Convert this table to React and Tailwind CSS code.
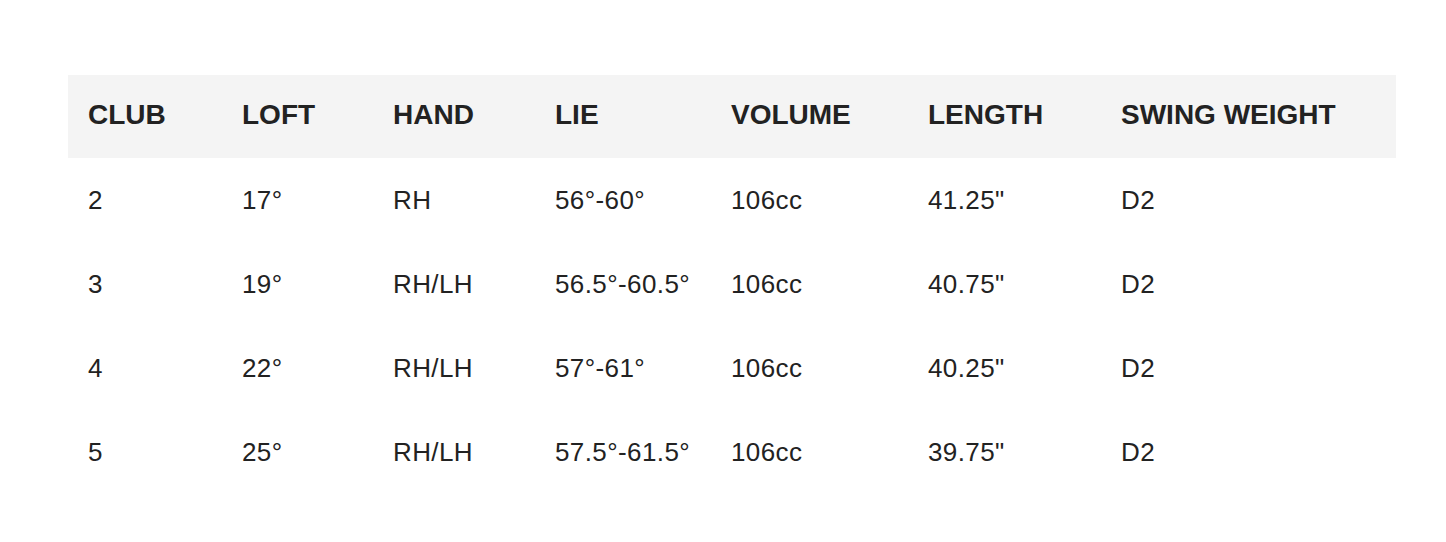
const headers = ["CLUB", "LOFT", "HAND", "LIE", "VOLUME", "LENGTH", "SWING WEIGHT"];

const rows = [
  ["2", "17°", "RH", "56°-60°", "106cc", "41.25\"", "D2"],
  ["3", "19°", "RH/LH", "56.5°-60.5°", "106cc", "40.75\"", "D2"],
  ["4", "22°", "RH/LH", "57°-61°", "106cc", "40.25\"", "D2"],
  ["5", "25°", "RH/LH", "57.5°-61.5°", "106cc", "39.75\"", "D2"],
];

export default function App() {
  return (
    <div
      className="min-h-[542px] w-full bg-white pt-[75px] pl-[68px] pr-[50px] text-[#222222]"
      style={{ fontFamily: '"Liberation Sans", Arial, sans-serif' }}
    >
      <table className="w-[1328px] table-fixed border-collapse">
        <colgroup>
          <col className="w-[154px]" />
          <col className="w-[151px]" />
          <col className="w-[162px]" />
          <col className="w-[176px]" />
          <col className="w-[197px]" />
          <col className="w-[193px]" />
          <col className="w-[295px]" />
        </colgroup>
        <thead>
          <tr className="h-[83px] bg-[#f4f4f4]">
            {headers.map((h) => (
              <th
                key={h}
                className="pl-5 pb-[4px] text-left align-middle text-[28px] font-bold leading-none whitespace-nowrap"
              >
                {h}
              </th>
            ))}
          </tr>
        </thead>
        <tbody>
          {rows.map((r) => (
            <tr key={r[0]} className="h-[84px]">
              {r.map((c, i) => (
                <td
                  key={i}
                  className="pl-5 text-left align-middle text-[26px] leading-none tracking-[0.4px] whitespace-nowrap"
                >
                  {c}
                </td>
              ))}
            </tr>
          ))}
        </tbody>
      </table>
    </div>
  );
}
